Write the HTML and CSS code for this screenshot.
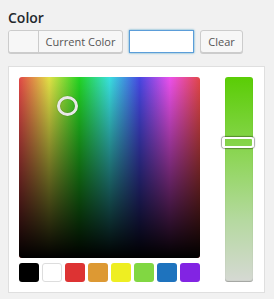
FILE: index.html
```html
<!DOCTYPE html>
<html lang="en">
<head>
    <meta charset="UTF-8">
    <title>Color</title>
    <link rel="stylesheet" href="styles.css">
</head>
<body>
    <div class="field">
        <label class="field-label">Color</label>
        <div class="color-row">
            <button class="color-result" type="button">
                <span class="swatch"></span>
                <span class="result-text">Current Color</span>
            </button>
            <input class="color-input" type="text" value="">
            <button class="btn-clear" type="button">Clear</button>
        </div>
        <!-- Caixa do seletor -->
        <div class="picker">
            <div class="picker-main">
                <div class="square">
                    <div class="square-shade"></div>
                    <span class="square-handle"></span>
                </div>
                <div class="palette">
                    <span class="pal" style="background:#000"></span>
                    <span class="pal pal-white" style="background:#fff"></span>
                    <span class="pal" style="background:#dd3333"></span>
                    <span class="pal" style="background:#dd9933"></span>
                    <span class="pal" style="background:#eeee22"></span>
                    <span class="pal" style="background:#81d742"></span>
                    <span class="pal" style="background:#1e73be"></span>
                    <span class="pal" style="background:#8224e3"></span>
                </div>
            </div>
            <div class="slider">
                <span class="slider-handle"></span>
            </div>
        </div>
    </div>
</body>
</html>
```

FILE: styles.css
```css
* {
    margin: 0;
    padding: 0;
    box-sizing: border-box;
}
body {
    background-color: #f1f1f1;
    font-family: 'Open Sans', sans-serif;
    color: #23282d;
    padding: 10px 8px 8px 8px;
}
.field-label {
    display: block;
    font-size: 14px;
    font-weight: 600;
    line-height: 16px;
    margin-bottom: 4px;
}
.color-row {
    display: flex;
    align-items: flex-start;
    height: 24px;
    margin-bottom: 12px;
}
.color-result {
    display: flex;
    height: 23px;
    width: 115px;
    border: 1px solid #ccc;
    border-radius: 3px;
    background-color: #f7f7f7;
    box-shadow: 0 1px 0 #ccc;
    overflow: hidden;
    font-family: inherit;
    cursor: pointer;
}
.swatch {
    width: 30px;
    height: 100%;
    border-right: 1px solid #ccc;
    background-color: #f7f7f7;
}
.result-text {
    flex: 1;
    font-size: 11px;
    line-height: 21px;
    color: #555;
    text-align: center;
}
.color-input {
    width: 65px;
    height: 23px;
    margin-left: 6px;
    border: 1px solid #5b9dd9;
    box-shadow: 0 0 2px rgba(30, 140, 190, 0.8);
    background-color: #fff;
    font-family: inherit;
    outline: none;
}
.btn-clear {
    width: 43px;
    height: 23px;
    margin-left: 6px;
    border: 1px solid #ccc;
    border-radius: 3px;
    background-color: #f7f7f7;
    box-shadow: 0 1px 0 #ccc;
    color: #555;
    font-family: inherit;
    font-size: 11px;
    cursor: pointer;
}
/* Seletor */
.picker {
    display: flex;
    width: 257px;
    height: 227px;
    padding: 10px 11px 10px 10px;
    background-color: #fff;
    border: 1px solid #dfdfdf;
}
.picker-main {
    width: 181px;
}
.square {
    position: relative;
    width: 181px;
    height: 181px;
    border-radius: 3px;
    overflow: hidden;
    background: linear-gradient(to right,
        hsl(0, 72%, 58%), hsl(60, 72%, 58%), hsl(120, 72%, 48%),
        hsl(180, 72%, 55%), hsl(240, 72%, 58%), hsl(300, 80%, 62%), hsl(360, 72%, 58%));
}
.square-shade {
    position: absolute;
    inset: 0;
    background: linear-gradient(to bottom, rgba(0, 0, 0, 0) 0%, rgba(0, 0, 0, 0.45) 45%, #000 100%);
}
.square-handle {
    position: absolute;
    left: 38px;
    top: 19px;
    width: 21px;
    height: 20px;
    border: 3px solid #e8e8e8;
    border-radius: 50%;
    box-shadow: 0 0 1px rgba(0, 0, 0, 0.5), inset 0 0 1px rgba(0, 0, 0, 0.5);
}
.palette {
    display: flex;
    gap: 3px;
    margin-top: 5px;
}
.pal {
    width: 20px;
    height: 19px;
    border-radius: 3px;
}
.pal-white {
    border: 1px solid #ddd;
}
.slider {
    position: relative;
    width: 28px;
    height: 205px;
    margin-left: 25px;
    border-radius: 3px;
    background: linear-gradient(to bottom, #5acd05 0%, #8fd65a 40%, #b5d9a0 70%, #d6d9d4 100%);
    box-shadow: inset 0 -1px 1px rgba(0, 0, 0, 0.25);
}
.slider-handle {
    position: absolute;
    left: -3px;
    top: 60px;
    width: 32px;
    height: 11px;
    border: 2px solid #fff;
    border-radius: 3px;
    box-shadow: 0 0 1px 1px rgba(0, 0, 0, 0.35);
}
```
